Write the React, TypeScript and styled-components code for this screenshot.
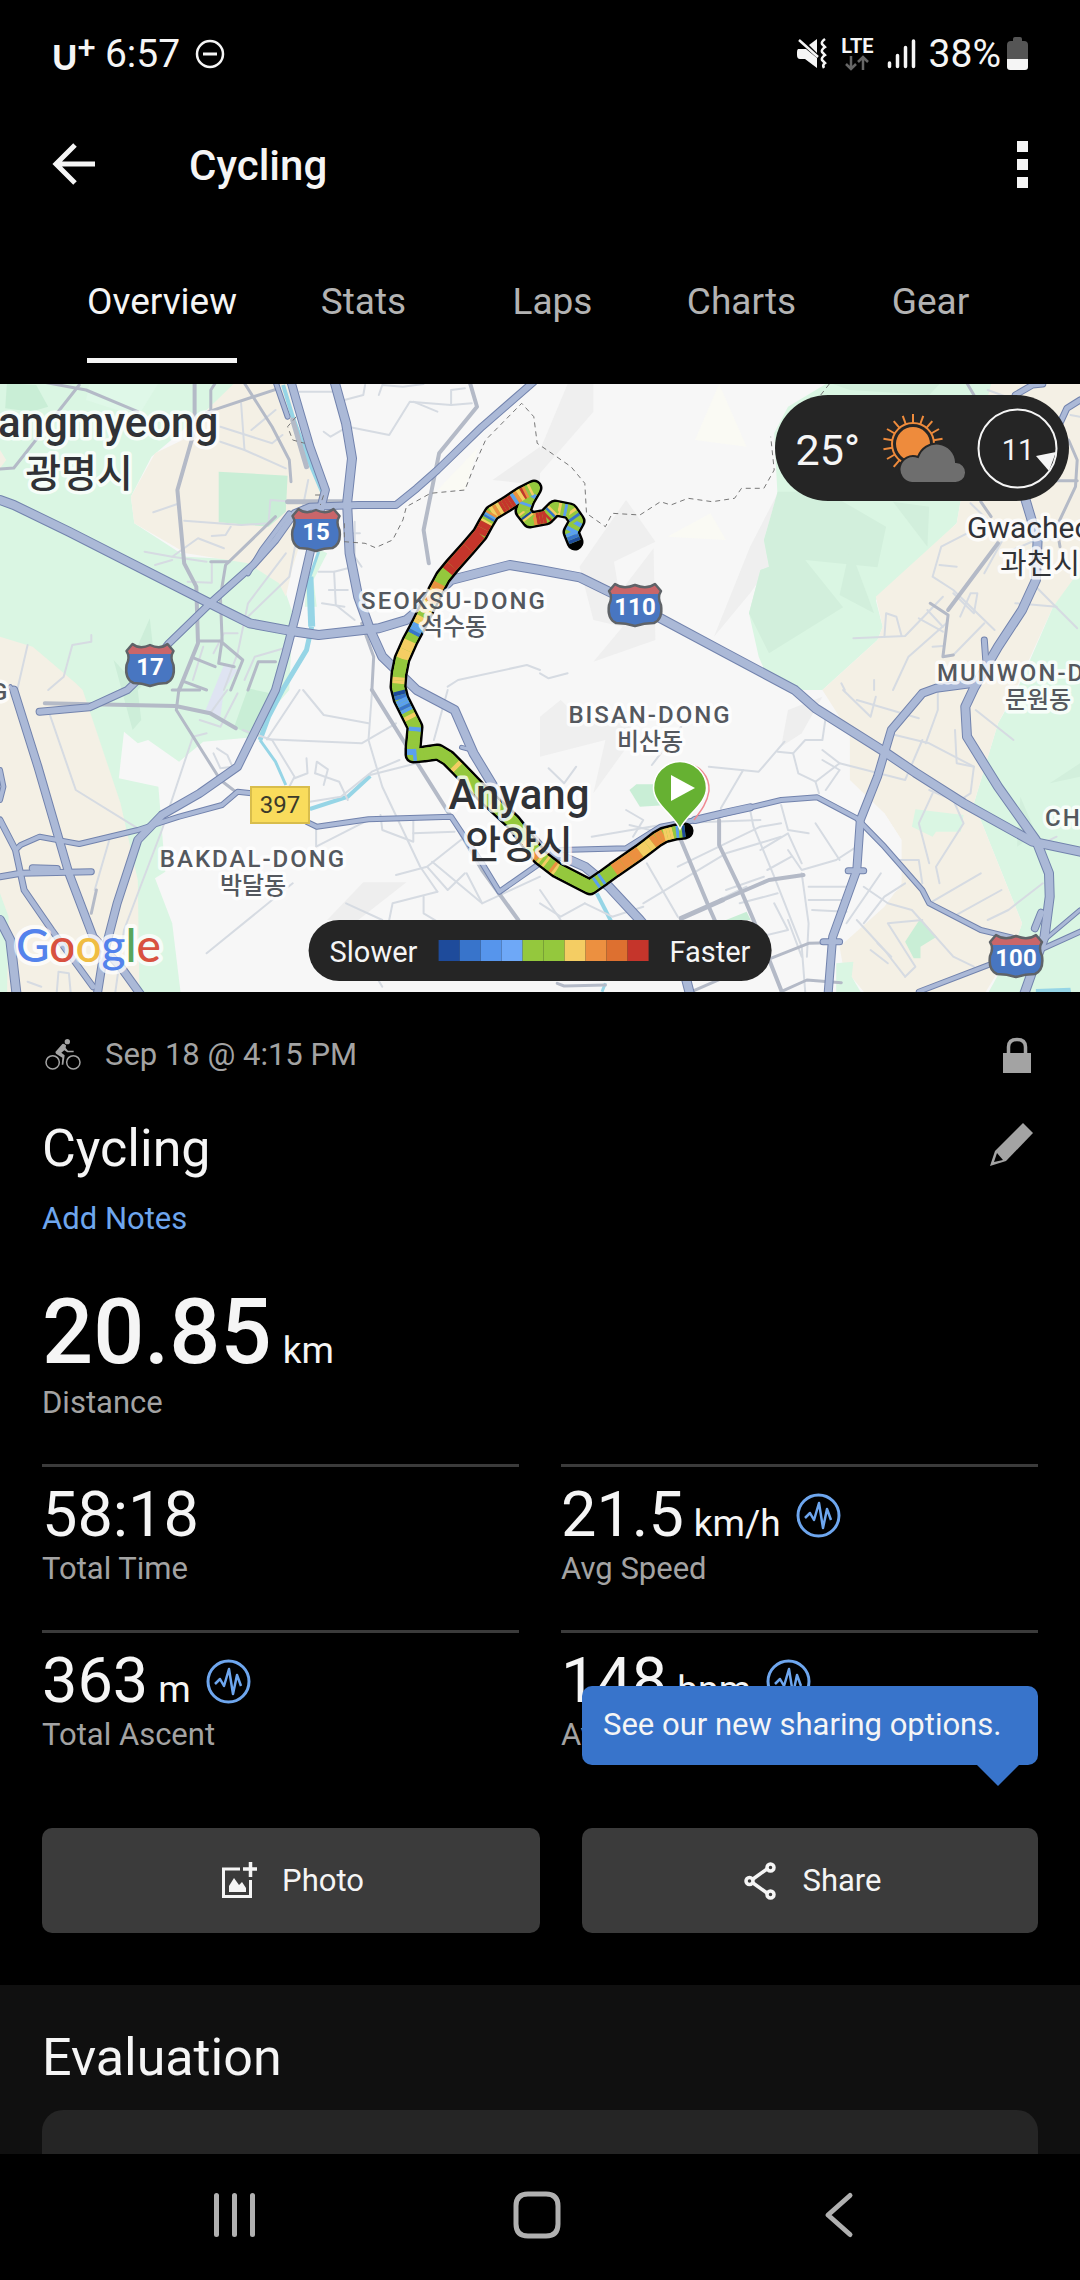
import React from "react";
import styled, { createGlobalStyle, css } from "styled-components";

const color = {
  black: "#000000",
  text: "#f5f5f5",
  muted: "#a3a3a3",
  link: "#6ea6ee",
  divider: "#3b3b3b",
  button: "#3b3b3b",
  panel: "#101010",
  card: "#252525",
  tooltip: "#3874cb",
};

const GlobalStyle = createGlobalStyle`
  *, *::before, *::after { box-sizing: border-box; }
  body {
    margin: 0;
    background: ${color.black};
    color: ${color.text};
    font-family: Roboto, "Noto Sans CJK KR", sans-serif;
  }
  button { font: inherit; color: inherit; background: none; border: 0; padding: 0; cursor: pointer; }
  svg { display: block; flex: none; }
`;

const Screen = styled.div`
  min-height: 100vh;
  display: flex;
  flex-direction: column;
`;

/* ---------- status bar ---------- */

const StatusBar = styled.div`
  height: 108px;
  padding: 0 52px;
  display: flex;
  align-items: center;
  justify-content: space-between;
  font-size: 39px;
  line-height: 44px;
`;

const StatusGroup = styled.div<{ $gap: number }>`
  display: flex;
  align-items: center;
  gap: ${(p) => p.$gap}px;
`;

const Carrier = styled.span`
  display: flex;
  align-items: flex-start;
  font-family: Lato, Roboto, sans-serif;
  font-weight: 900;
  font-size: 34px;
  line-height: 40px;
  padding-top: 6px;
`;

const CarrierPlus = styled.span`
  font-size: 32px;
  line-height: 20px;
`;

const Clock = styled.span`
  margin-right: 6px;
`;

const Network = styled.span`
  display: flex;
  flex-direction: column;
  align-items: center;
  font-size: 20px;
  line-height: 18px;
  font-weight: 700;
`;

const BatteryGroup = styled.span`
  display: flex;
  align-items: center;
  gap: 6px;
`;

/* ---------- app bar and tabs ---------- */

const AppBar = styled.header`
  height: 112px;
  padding: 0 52px;
  display: flex;
  align-items: center;
`;

const AppTitle = styled.h1`
  flex: 1;
  margin: 0;
  padding: 3px 0 0 93px;
  font-size: 42px;
  line-height: 50px;
  font-weight: 500;
`;

const Tabs = styled.div`
  display: flex;
  padding: 0 0 21px 55px;
`;

const Tab = styled.button<{ $active?: boolean }>`
  min-width: 189px;
  padding: 0 32px;
  display: flex;
  flex-direction: column;
  align-items: center;
  color: ${(p) => (p.$active ? color.text : "#b3b3b3")};
  font-size: 37px;
  line-height: 44px;
`;

const TabLabel = styled.span<{ $active?: boolean }>`
  padding: 60px 0 34px;
  border-bottom: 5px solid ${(p) => (p.$active ? color.text : "transparent")};
`;

/* ---------- map ---------- */

const MapPanel = styled.section`
  position: relative;
  height: 608px;
  background: #f7f7f7;
  overflow: hidden;
`;

const MapDrawing = styled.svg`
  width: 100%;
  height: 100%;
`;

const pill = css`
  position: absolute;
  display: flex;
  align-items: center;
  background: ${color.card};
  border-radius: 53px;
`;

const WeatherPill = styled.div`
  ${pill}
  top: 11px;
  right: 11px;
  height: 106px;
  padding: 0 11px 0 21px;
  font-size: 43px;
  line-height: 50px;
`;

const Temperature = styled.span`
  padding-top: 3px;
`;

const WeatherIcon = styled.svg`
  margin: 0 11px 0 22px;
`;

const Legend = styled.div`
  ${pill}
  left: 50%;
  bottom: 11px;
  transform: translateX(-50%);
  height: 61px;
  padding: 0 21px;
  gap: 21px;
  font-size: 29px;
  line-height: 36px;
`;

const LegendLabel = styled.span`
  padding-top: 2px;
`;

const LegendScale = styled.span`
  display: flex;
`;

const LegendStep = styled.span<{ $color: string }>`
  width: 21px;
  height: 21px;
  background: ${(p) => p.$color};
`;

/* ---------- summary ---------- */

const Summary = styled.section`
  padding: 44px 42px 52px;
`;

const MetaRow = styled.div`
  display: flex;
  align-items: center;
  gap: 21px;
  height: 38px;
`;

const Label = styled.span<{ $grow?: boolean }>`
  flex: ${(p) => (p.$grow ? 1 : "none")};
  color: ${color.muted};
  font-size: 31px;
  line-height: 38px;
`;

const TitleRow = styled.div`
  display: flex;
  align-items: flex-start;
  justify-content: space-between;
  margin-top: 44px;
`;

const SectionTitle = styled.h2`
  margin: 0;
  font-size: 52px;
  line-height: 62px;
  font-weight: 400;
`;

const NotesLink = styled.a`
  display: block;
  width: fit-content;
  margin-top: 20px;
  color: ${color.link};
  font-size: 31px;
  line-height: 38px;
  text-decoration: none;
`;

const Distance = styled.div`
  display: flex;
  flex-direction: column;
  margin: 44px 0 42px;
`;

const Value = styled.span<{ $large?: boolean }>`
  display: flex;
  align-items: baseline;
  gap: ${(p) => (p.$large ? 11 : 10)}px;
  font-size: ${(p) => (p.$large ? 90 : 63)}px;
  line-height: ${(p) => (p.$large ? 102 : 70)}px;
  font-weight: ${(p) => (p.$large ? 500 : 400)};
`;

const Unit = styled.span`
  font-size: 37px;
  line-height: 44px;
  font-weight: 400;
`;

const Badge = styled.button`
  align-self: center;
  margin-left: 5px;
`;

const StatGrid = styled.div`
  display: grid;
  grid-template-columns: 1fr 1fr;
  column-gap: 42px;
`;

const Stat = styled.div`
  display: flex;
  flex-direction: column;
  height: 166px;
  padding-top: 13px;
  border-top: 3px solid ${color.divider};
`;

const Actions = styled.div`
  display: grid;
  grid-template-columns: 498fr 456fr;
  column-gap: 42px;
  margin-top: 32px;
`;

const ActionCell = styled.div`
  position: relative;
`;

const ActionButton = styled.button`
  width: 100%;
  height: 105px;
  display: flex;
  align-items: center;
  justify-content: center;
  gap: 22px;
  border-radius: 10px;
  background: ${color.button};
  font-size: 31px;
  line-height: 38px;
`;

const Tooltip = styled.div`
  position: absolute;
  left: 0;
  right: 0;
  bottom: calc(100% + 63px);
  padding: 20px 21px 21px;
  border-radius: 10px;
  background: ${color.tooltip};
  font-size: 31px;
  line-height: 38px;
  white-space: nowrap;

  &::after {
    content: "";
    position: absolute;
    top: 100%;
    right: 19px;
    border: 21px solid transparent;
    border-top-color: ${color.tooltip};
    border-bottom: 0;
  }
`;

/* ---------- evaluation and navigation ---------- */

const Evaluation = styled.section`
  flex: 1;
  display: flex;
  flex-direction: column;
  padding: 42px 42px 0;
  background: ${color.panel};
`;

const EvaluationCard = styled.div`
  flex: 1;
  min-height: 44px;
  margin-top: 21px;
  border-radius: 21px 21px 0 0;
  background: ${color.card};
`;

const NavBar = styled.nav`
  height: 126px;
  padding: 0 90px 4px 84px;
  display: flex;
`;

const NavButton = styled.button`
  flex: 1;
  display: flex;
  align-items: center;
  justify-content: center;
`;

/* ---------- map data ---------- */

/* The map is kept as four survey sheets, each 1568 x 930 units, laid two by two. */
type Sheet = "nw" | "ne" | "sw" | "se";
const sheetOrigin: Record<Sheet, [number, number]> = {
  nw: [0, -4],
  ne: [540, -4],
  sw: [0, 306],
  se: [540, 306],
};

const project = (line: string) => {
  let sheet: Sheet = "nw";
  const out: string[] = [];
  line.split(" ").forEach((token) => {
    if (token in sheetOrigin) {
      sheet = token as Sheet;
      return;
    }
    const [x, y] = token.split(",").map(Number);
    const [ox, oy] = sheetOrigin[sheet];
    out.push(`${((x * 540) / 1568 + ox).toFixed(1)},${(y / 3 + oy).toFixed(1)}`);
  });
  return "M" + out.join("L");
};

const areas: [string, string][] = [
  ["#daf6e3", "nw 0,0 700,0 600,90 440,230 380,350 390,430 540,530 720,540 820,610 850,700 840,930 sw 790,60 750,140 590,155 520,215 430,150 400,160 360,125 345,265 460,290 480,545 450,565 500,700 527,930 0,930"],
  ["#f4f0e5", "nw 690,0 830,0 880,200 945,340 900,400 850,560 830,650 810,610 720,550 540,520 390,430 380,350 450,220 530,180 610,80"],
  ["#f4f0e5", "nw 0,210 18,240 0,265"],
  ["#f4f0e5", "nw 0,770 95,800 220,910 240,930 sw 350,340 400,570 405,930 20,930 25,680 0,610"],
  ["#daf6e3", "nw 930,510 950,520 910,600 920,680 885,680 890,600"],
  ["#c9eed6", "nw 635,275 835,287 830,395 780,440 635,427"],
  ["#c9eed6", "nw 20,10 105,15 140,80 90,95 15,85"],
  ["#dff8e8", "nw 260,10 460,10 400,110 250,60"],
  ["#cdeed9", "nw 330,840 365,880 435,715 445,810 480,850 400,930 sw 410,90 385,120"],
  ["#c9eed6", "sw 720,-5 785,10 745,145 680,110"],
  ["#dfe4f2", "nw 650,855 690,870 650,930 sw 640,80 595,65"],
  ["#eeeeee", "nw 1568,200 1430,300 1568,315"],
  ["#fafaf4", "nw 1390,200 1270,330 1350,330"],
  ["#efefef", "ne 80,12 155,12 155,95 0,280 0,210"],
  ["#fafaf4", "ne 450,180 520,12 600,200"],
  ["#efefef", "ne 250,360 335,485 215,545 230,640 330,505 335,780 155,845 240,740 155,720 115,560"],
  ["#efefef", "ne 690,340 650,480 665,560 610,640 505,770 610,500"],
  ["#fafaf4", "ne 370,470 540,480 495,400"],
  ["#eeeeee", "sw 1180,577 1055,577 950,690 1040,690"],
  ["#efefef", "se 0,200 190,150 155,310 260,160 270,60 120,90 60,30 0,80"],
  ["#eeeeee", "se 700,170 720,60 820,20 760,130"],
  ["#daf6e3", "ne 830,12 1320,12 1310,45 1220,370 1210,430 1000,640 975,660 995,740 980,780 820,930 740,930 660,890 635,830 607,700 640,570 665,560 650,480 690,350 680,160 720,80"],
  ["#d2efdc", "ne 690,335 830,335 1005,440 980,562 770,540 880,682 665,820 607,700 640,570 665,560 650,480"],
  ["#d2efdc", "ne 900,505 970,700 870,645"],
  ["#d2efdc", "ne 1025,365 1130,380 1125,500"],
  ["#d2efdc", "ne 850,12 1160,12 1130,45 900,30"],
  ["#f4f0e5", "ne 1310,12 1568,12 1568,580 1490,680 1380,930 820,930 980,780 995,740 975,650 1210,430 1220,370"],
  ["#daf6e3", "ne 1568,570 1490,680 1385,930 se 1330,100 1260,340 1400,700 1380,760 1290,930 1568,930"],
  ["#f4f0e5", "se 820,0 1382,0 1330,100 1260,340 1400,700 1380,760 1280,930 960,930 880,830 870,770 1000,650 1050,580 1050,450 1000,370 900,270 900,130"],
  ["#f7f7f7", "se 880,380 1000,370 1050,450 1010,500 1050,590 980,650 870,660"],
  ["#d2efdc", "se 1480,280 1568,220 1568,260"],
  ["#d2efdc", "se 1395,320 1385,470 1440,430"],
  ["#daf6e3", "se 1090,358 1230,375 1222,425 1150,425 1140,440 1080,410"],
  ["#c9eed6", "se 1105,685 1152,740 1105,770 1105,805 1085,805 1060,755"],
  ["#c9eed6", "se 280,283 372,283 372,345 290,350 260,300"],
  ["#c9eed6", "se 540,690 600,665 612,690"],
  ["#daf6e3", "se 860,820 910,815 905,860 945,930 860,930"],
  ["#96d5e6", "se 1440,897 1540,893 1545,930 1440,930"],
];

const water: [number, string][] = [
  [4, "nw 822,15 850,110 900,250 935,335"],
  [3, "nw 925,515 900,590"],
  [7, "nw 900,590 905,740"],
  [5, "nw 905,740 890,810 820,930 sw 780,80 755,150"],
  [3, "sw 755,150 800,215 830,285"],
  [4, "sw 900,357 1010,320 1075,258"],
  [4, "se 165,610 207,695"],
  [3, "se 180,905 190,880"],
];

const lanes = [
  "nw 870,35 965,35", "nw 940,155 960,170 1010,140 1130,165 1190,65 1310,75 1370,70", "nw 1310,75 1310,30 1350,25",
  "nw 1000,60 1055,45 1060,15", "nw 1100,45 1110,15 1170,20 1230,12", "nw 1200,65 1270,95",
  "nw 640,185 710,210 830,265", "nw 640,140 790,190 820,165", "nw 700,70 710,210", "nw 730,150 800,90",
  "nw 445,397 515,372", "nw 535,422 700,435 780,430 785,360 850,365", "nw 615,468 655,465 670,440", "nw 500,530 575,475 650,505",
  "nw 420,515 500,530 600,545", "nw 450,555 500,540", "nw 545,605 615,608 615,545", "nw 830,520 720,670 690,820 650,930",
  "nw 895,300 860,480 840,590 700,730", "nw 925,575 970,575 1010,565", "nw 955,630 1010,630", "nw 970,575 975,675 1030,720",
  "nw 935,670 1000,680", "nw 1030,425 1030,530 1050,560", "nw 1000,460 1045,460",
  "nw 80,795 50,930", "nw 265,765 265,785 210,795 185,890 140,930", "nw 840,800 740,830 710,900", "nw 590,800 560,900",
  "nw 1300,920 1330,900 1530,855 1568,870", "nw 690,760 650,760 620,820",
  "sw 140,60 220,300 400,415", "sw 880,0 940,75 1070,100", "sw 775,148 1050,160 1150,100", "sw 705,120 790,150 855,260 840,290",
  "sw 870,0 775,148", "sw 1080,10 1070,150 1110,290 1220,530 1270,605", "sw 900,335 990,320 1080,245 1160,210",
  "sw 890,205 893,250 855,265", "sw 915,250 920,215 952,238 940,285", "sw 915,250 985,275 1010,330",
  "sw 1075,255 1210,220", "sw 600,130 560,140 470,420 360,720 335,905", "sw 630,175 660,195 675,230 640,235 620,190",
  "sw 918,410 918,470 1060,395", "sw 1105,375 1110,420 1200,455 1200,390", "sw 1200,430 1320,425", "sw 600,790 850,580",
  "sw 1150,555 1240,530 1350,440", "sw 1240,530 1300,600 1350,550", "sw 1270,605 1140,640 1130,690", "sw 1230,620 1230,670 1270,695",
  "sw 1255,515 1400,640 1568,560", "sw 1005,640 1110,690", "sw 1355,550 1400,640", "sw 660,0 610,70", "sw 690,10 640,110 580,90",
  "sw 165,905 170,845 200,850 205,905", "sw 320,440 275,600", "sw 80,875 120,890", "sw 1300,0 1260,150", "sw 1000,700 1110,890",
  "se 25,235 70,280 105,230", "se 410,110 325,225", "se 490,230 635,245 710,155", "se 590,240 525,355", "se 690,185 735,190 770,150 820,150 830,80",
  "se 735,190 750,250 800,275 870,220 820,180", "se 820,210 870,240 830,300", "se 800,275 810,310", "se 870,220 1060,270 1110,150",
  "se 880,0 960,80 975,20", "se 920,30 1100,85", "se 1010,130 1130,160 1260,230", "se 1155,0 1155,60 1120,160", "se 1265,60 1375,150",
  "se 1205,120 1210,220 1260,230 1250,310 1220,330", "se 250,360 300,390 270,440", "se 260,405 400,440", "se 150,440 380,400 640,390",
  "se 400,530 640,410 700,400", "se 300,640 540,490 700,440", "se 700,345 720,420 780,430", "se 610,360 620,410 680,560 760,770 770,905",
  "se 310,520 400,680", "se 640,480 720,430 760,520", "se 660,540 730,500", "se 720,480 760,540 860,510 920,470", "se 760,550 780,700 775,800",
  "se 800,400 870,510", "se 780,590 900,590", "se 780,630 890,630", "se 790,660 890,665", "se 540,600 650,560", "se 520,630 600,590", "se 580,640 690,610",
  "se 940,590 1010,640 1080,660 1200,800 1260,830", "se 990,550 890,700", "se 940,700 1000,620 1060,580", "se 920,690 1000,780 1060,860",
  "se 960,780 1010,820", "se 980,760 1020,800", "se 1060,860 1090,830 1010,700 1110,690", "se 1130,300 1200,330 1230,400 1150,530 1160,580",
  "se 1140,310 1100,400 1130,520", "se 1130,640 1280,550", "se 1200,680 1340,600", "se 1300,690 1360,660 1460,580", "se 1030,510 1100,510 1110,580",
  "se 0,640 60,680 130,640", "se 0,600 60,690", "se 130,640 210,680 300,650", "se 680,640 720,720 640,740", "se 1460,460 1500,440", "se 720,690 760,800",
  "ne 1330,490 1310,430 1250,370", "ne 1240,460 1165,500 1140,590 1200,630 1320,750", "ne 1160,555 1210,560", "ne 910,775 1060,768 1170,650",
  "ne 1000,770 1005,700 1035,710 1050,768", "ne 1100,715 1170,755", "ne 1125,690 1170,740", "ne 1200,640 1260,700 1270,640 1250,640 1220,710",
  "ne 1140,800 1170,798", "ne 1290,730 1200,825", "ne 1180,730 1070,830 1025,930", "ne 1440,620 1560,745", "ne 1380,670 1500,680", "ne 875,910 885,930",
  "ne 970,900 970,930", "ne 1350,520 1440,480 1568,470", "ne 1290,580 1370,430", "ne 1540,105 1568,110", "ne 1300,30 1380,60", "ne 0,880 25,895 80,880",
];

const arterials: [number, string][] = [
  [3, "nw 0,267 40,264 230,15"], [3, "nw 120,5 250,30 400,95"], [4, "nw 565,10 565,150 515,330 535,550 570,620 575,790 520,930"],
  [3, "nw 625,10 612,30 612,100"], [3, "nw 600,97 810,25"], [3, "nw 710,10 790,140 840,240 845,305"], [3, "nw 800,410 655,555 640,650 645,780 635,850 680,860"],
  [4, "nw 1365,10 1385,80 1275,220 1230,450 1245,550"], [3, "nw 575,783 640,783 705,840 670,930"], [3, "nw 720,930 750,845 800,845"],
  [3, "nw 535,905 600,930"], [3, "nw 565,835 625,860"], [3, "nw 1050,730 1085,830 1080,930"], [3, "nw 612,545 665,545"], [5, "nw 835,365 1000,365"], [5, "nw 850,120 890,260"],
  [4, "sw 130,40 510,48 610,70 685,115"], [3, "sw 520,-5 512,60 640,270 690,310"], [4, "sw 1080,0 1200,200 1310,380 1400,540 1505,690"],
  [3, "sw 265,670 280,600"], [3, "sw 500,0 580,0"], [4, "se 405,440 490,650 520,720"], [4, "se 520,390 520,465 585,605 620,690 700,900"],
  [5, "se 410,685 530,630"], [4, "se 530,630 665,570 765,555"], [3, "se 670,805 780,760 840,758"], [3, "se 700,905 775,870 875,878"],
  [3, "se 50,880 70,888 190,885"], [3, "se 440,905 540,860"], [3, "ne 1133,670 1185,705 1170,830 1200,825"], [4, "ne 1185,690 1330,490"], [3, "ne 1240,10 1260,45"],
  [3, "ne 1280,365 1310,410"], [3, "ne 1500,302 1560,302"], [3, "ne 1535,180 1560,240 1555,320 1500,440 1510,500"],
];

const highways: [number, string][] = [
  [9, "nw 0,360 40,375 200,455 600,665 725,730 840,752 925,765 1100,745 1180,720 1260,650 1310,600 1480,555 ne 0,570 115,592 210,640 350,715 540,820 740,930 se 800,55 1000,185 1090,248 1230,340 1430,455 1568,485"],
  [7, "nw 1550,5 1400,140 1270,270 1210,325 1150,375 1040,375 900,380 855,400 800,480 735,555 610,670 490,790 430,870 370,930 sw 260,52 115,65"],
  [5, "nw 720,580 760,510 840,400"],
  [8, "nw 845,5 860,60 900,200 945,330 930,390 900,520 860,700 830,820 800,930 sw 690,230 580,310 470,375 400,450 340,640 300,800 280,930"],
  [5, "nw 800,5 835,110"],
  [9, "nw 970,0 1005,130 1022,235 1008,370 1015,520 1040,650 1075,750 1110,830 1210,930 sw 1320,60 1375,190 1480,370 1568,470 se 130,530 200,590 290,690 420,850 440,930"],
  [4, "sw 1340,172 1370,180"],
  [8, "sw 40,0 110,230 200,550 270,740 350,830 420,930"],
  [6, "sw 0,390 45,480 70,600 150,720 270,890"],
  [5, "sw 45,480 60,465 115,440 230,462 400,420 520,380 645,345 690,305 730,310"],
  [5, "sw 890,395 920,410 1070,388 1310,380 1400,520 1450,605 se 0,520 60,480 250,475 350,410 480,385 700,330 805,322 920,385 1000,470 1110,600 1130,640 1280,720 1400,750"],
  [7, "se 450,390 530,370 610,352"],
  [6, "sw 0,560 60,550 265,545"],
  [7, "sw 95,535 165,537"],
  [5, "sw 0,240 10,290 0,330"],
  [9, "sw 0,690 30,750 50,930"],
  [4, "nw 30,920 40,935"],
  [9, "ne 1410,360 1445,480 1440,600 1400,690 1330,800 1260,925 se 1235,50 1240,140 1330,290 1440,450 1478,550 1480,620 1465,740 1400,930"],
  [6, "ne 1290,780 1295,850"],
  [8, "ne 1260,910 1150,925 se 1110,10 1020,120 980,260 930,390 920,540 850,740 835,930"],
  [6, "se 895,542 940,542"],
  [6, "se 822,755 870,755"],
  [6, "ne 1568,60 1530,85 1510,130"],
  [6, "ne 1380,45 1430,15 1460,12"],
  [5, "se 1100,905 1310,822"],
  [5, "se 1440,785 1568,725"],
  [4, "se 1470,745 1568,660"],
  [7, "se 1437,715 1455,668"],
];

const borders = [
  "nw 1000,430 1000,485 1060,490 1090,503 1140,480 1170,420 1180,380 1250,340 1350,330 1380,250 1410,180 1515,70 1550,110 1560,190 ne 90,260 130,310 135,400 190,440 210,400 290,405 350,365 380,375 430,355 500,365 565,355 585,325 650,325 680,270 670,170",
  "ne 815,45 840,12",
  "nw 860,110 835,140 850,180 885,190",
  "nw 915,345 940,345 930,375",
];

const pace: Record<string, string> = {
  n: "#1e4b9b",
  b: "#3874cb",
  s: "#5ba0ee",
  g: "#94c83d",
  y: "#f4cd63",
  o: "#ec9040",
  r: "#c5352b",
};

/* Each stop: x, y, and the paces met on the way to it, in equal parts. */
const route: [number, number, string][] = [
  [575, 158, ""], [571, 148, "nbs"], [577, 137, "sgs"], [570, 127, "gbgy"], [555, 124, "gsgyg"], [546, 133, "gybgr"], [530, 136, "rrrog"], [523, 127, "gyngy"],
  [527, 116, "ggsg"], [534, 104, "gsg"], [522, 110, "gygor"], [507, 120, "yosrr"], [492, 129, "rryoy"], [486, 139, "osbgy"], [480, 150, "rr"], [468, 164, "r"],
  [452, 182, "r"], [443, 193, "rg"], [436, 206, "ggoo"], [428, 222, "yyoy"], [417, 244, "yygyys"], [410, 257, "sbgg"], [402, 275, "yy"],
  [399, 290, "gg"], [398, 303, "gyyg"], [401, 315, "gnb"], [409, 331, "ssbsg"], [415, 343, "ygg"], [413, 365, "sgggg"], [413, 371, "s"], [424, 370, "sgg"],
  [438, 368, "g"], [448, 374, "g"], [458, 384, "ggy"], [482, 409, "gggg"], [513, 438, "ggygsg"], [540, 473, "gggygo"], [557, 486, "ygyggoy"],
  [590, 503, "ggg"], [603, 494, "ggsgs"], [614, 486, "gg"], [640, 468, "ooo"], [648, 462, "y"], [657, 455, "yo"], [664, 451, "oo"], [676, 448, "yyyg"], [685, 447, "sgn"],
];

const routeLine = "M" + route.map(([x, y]) => `${x},${y}`).join("L");

const routeParts = route.slice(1).flatMap(([x, y, paces], i) => {
  const [px, py] = route[i];
  const n = paces.length;
  return paces.split("").map((code, k) => ({
    d: `M${px + ((x - px) * k) / n},${py + ((y - py) * k) / n}L${px + ((x - px) * (k + 1)) / n},${py + ((y - py) * (k + 1)) / n}`,
    stroke: pace[code],
  }));
});

const MapText = styled.text<{ $size: number; $weight?: number; $tracked?: boolean; $ink?: string }>`
  font-family: Roboto, "Noto Sans CJK KR", sans-serif;
  font-size: ${(p) => p.$size}px;
  font-weight: ${(p) => p.$weight ?? 500};
  letter-spacing: ${(p) => (p.$tracked ? "2px" : "normal")};
  fill: ${(p) => p.$ink ?? "#54585e"};
  stroke: rgba(255, 255, 255, 0.8);
  stroke-width: 7px;
  stroke-linejoin: round;
  paint-order: stroke;
`;

const SignText = styled.text<{ $ink: string; $weight: number }>`
  font-family: Roboto, sans-serif;
  font-size: 24px;
  font-weight: ${(p) => p.$weight};
  fill: ${(p) => p.$ink};
  text-anchor: middle;
`;

const LogoText = styled.text`
  font-family: Lato, sans-serif;
  font-size: 46px;
  font-weight: 500;
  stroke: rgba(255, 255, 255, 0.75);
  stroke-width: 8px;
  stroke-linejoin: round;
  paint-order: stroke;
`;

function Shield({ x, y, w, label }: { x: number; y: number; w: number; label: string }) {
  const h = w / 2;
  const outline = `M${-h + 7},-21 Q${-h / 2 + 2},-15 0,-20 Q${h / 2 - 2},-15 ${h - 7},-21 L${h - 1},-14 Q${h - 5},-8 ${h - 1},0 Q${h + 1},14 ${h - 8},18 Q${h / 3},18 0,21 Q${-h / 3},18 ${-h + 8},18 Q${-h - 1},14 ${-h + 1},0 Q${-h + 5},-8 ${-h + 1},-14 Z`;
  return (
    <g transform={`translate(${x} ${y})`}>
      <path d={outline} fill="#4876c1" />
      <path d={`M${-h + 7},-21 Q${-h / 2 + 2},-15 0,-20 Q${h / 2 - 2},-15 ${h - 7},-21 L${h - 1},-14 L${h - 3},-11 H${-h + 3} L${-h + 1},-14 Z`} fill="#c9666a" />
      <path d={outline} fill="none" stroke="#5f6368" strokeWidth="2.5" strokeLinejoin="round" />
      <SignText $ink="#ffffff" $weight={700} y="10">{label}</SignText>
    </g>
  );
}

function RouteMap() {
  return (
    <MapDrawing viewBox="0 0 1080 608" preserveAspectRatio="xMidYMid slice" aria-label="Route map">
      {areas.map(([fill, line], i) => <path key={i} d={project(line) + "Z"} fill={fill} />)}
      <g fill="none" stroke="#96d5e6">
        {water.map(([w, line], i) => <path key={i} d={project(line)} strokeWidth={w} />)}
      </g>
      <g fill="none" strokeLinecap="round" strokeLinejoin="round">
        {lanes.map((line, i) => <path key={i} d={project(line)} stroke="#d6dbe2" strokeWidth="2" />)}
        {arterials.map(([w, line], i) => <path key={i} d={project(line)} stroke="#b4bac7" strokeWidth={w} />)}
        {highways.map(([w, line], i) => <path key={i} d={project(line)} stroke="#7283ad" strokeWidth={w + 1} />)}
        {highways.map(([w, line], i) => <path key={i} d={project(line)} stroke="#abb9d7" strokeWidth={w - 1} />)}
      </g>
      {borders.map((line, i) => (
        <path key={i} d={project(line)} fill="none" stroke="#777777" strokeWidth="1" strokeDasharray="5 4" />
      ))}

      <g fill="none" strokeLinejoin="round">
        <path d={routeLine} stroke="#000000" strokeWidth="17" strokeLinecap="round" />
        <path d={routeLine} stroke={pace.g} strokeWidth="12" />
        {routeParts.map((part, i) => <path key={i} d={part.d} stroke={part.stroke} strokeWidth="12" />)}
      </g>

      <MapText $size={42} $ink="#303236" x="-2" y="53">angmyeong</MapText>
      <MapText $size={39} $ink="#303236" x="79" y="103" textAnchor="middle">광명시</MapText>
      <MapText $size={24} $tracked x="454" y="225" textAnchor="middle">SEOKSU-DONG</MapText>
      <MapText $size={24} x="454" y="251" textAnchor="middle">석수동</MapText>
      <MapText $size={30} $weight={400} $ink="#303236" x="967" y="154">Gwacheo</MapText>
      <MapText $size={29} $weight={400} $ink="#303236" x="1000" y="190">과천시</MapText>
      <MapText $size={24} $tracked x="937" y="297">MUNWON-D</MapText>
      <MapText $size={24} x="1038" y="324" textAnchor="middle">문원동</MapText>
      <MapText $size={24} x="-9" y="316">G</MapText>
      <MapText $size={24} $tracked x="650" y="339" textAnchor="middle">BISAN-DONG</MapText>
      <MapText $size={24} x="650" y="366" textAnchor="middle">비산동</MapText>
      <MapText $size={42} $ink="#303236" x="519" y="425" textAnchor="middle">Anyang</MapText>
      <MapText $size={39} $ink="#303236" x="519" y="474" textAnchor="middle">안양시</MapText>
      <MapText $size={24} $tracked x="1045" y="442">CH</MapText>
      <MapText $size={24} $tracked x="253" y="483" textAnchor="middle">BAKDAL-DONG</MapText>
      <MapText $size={24} x="253" y="510" textAnchor="middle">박달동</MapText>

      <Shield x={316} y={146} w={49} label="15" />
      <Shield x={150} y={281} w={49} label="17" />
      <Shield x={635} y={221} w={54} label="110" />
      <Shield x={1016} y={572} w={54} label="100" />
      <rect x="251" y="403" width="58" height="36" fill="#f9dc5c" stroke="#d8bd4c" strokeWidth="2" />
      <SignText $ink="#3c3a2a" $weight={400} x="280" y="429">397</SignText>

      <path d="M684 379 C699 380 710 392 709 407 C707 420 700 428 694 436" fill="none" stroke="#f08a92" strokeWidth="1.5" />
      <path d="M680 445 C674 431 653.500 420 653.500 404 A26.500 26.500 0 0 1 706.500 404 C706.500 420 686 431 680 445 Z" fill="#66b132" stroke="#ffffff" strokeWidth="1.5" />
      <path d="M671 391 L695 404 L671 417 Z" fill="#ffffff" />

      <LogoText x="16" y="578">
        <tspan fill="#5383ec">G</tspan>
        <tspan fill="#d85140">o</tspan>
        <tspan fill="#f0bd42">o</tspan>
        <tspan fill="#5383ec">g</tspan>
        <tspan fill="#58a55c">l</tspan>
        <tspan fill="#d85140">e</tspan>
      </LogoText>
    </MapDrawing>
  );
}

const rayAngles = Array.from({ length: 12 }, (_, k) => -90 + (k - 7) * 20);

function Weather() {
  return (
    <WeatherPill>
      <Temperature>25°</Temperature>
      <WeatherIcon width="84" height="72" viewBox="0 0 84 72" aria-label="Partly cloudy">
        <circle cx="31" cy="32" r="17" fill="#ee8b3c" />
        <circle cx="31" cy="32" r="21" fill="none" stroke="#ee8b3c" strokeWidth="2" />
        {rayAngles.map((a) => (
          <path key={a} d="M21 0H30" stroke="#ee8b3c" strokeWidth="2" transform={`translate(31 32) rotate(${a})`} />
        ))}
        <path
          d="M30 71 A13.500 13.500 0 1 1 36 45 A19.500 19.500 0 0 1 74 50 A10.500 10.500 0 0 1 73 71 Z"
          fill="#6e6e6e"
          stroke={color.card}
          strokeWidth="2"
        />
      </WeatherIcon>
      <svg width="81" height="81" viewBox="0 0 81 81" aria-label="Wind 11">
        <circle cx="40.500" cy="40.500" r="39" fill="none" stroke={color.text} strokeWidth="2" />
        <path d="M59 48 L79 44 L72 63 Z" fill={color.text} />
        <text x="41" y="52" textAnchor="middle" fontSize="29" fontFamily="Roboto, sans-serif" fill={color.text}>11</text>
      </svg>
    </WeatherPill>
  );
}

const legendSteps = ["#1e4b9b", "#3874cb", "#5695ec", "#6ea8f7", "#94c83d", "#94c83d", "#f4cd63", "#ec9040", "#dd7030", "#c5352b"];

/* ---------- small drawings ---------- */

const MuteIcon = () => (
  <svg width="32" height="32" viewBox="0 0 32 32" fill={color.text}>
    <path d="M2 11 Q1 12 1 14 V17 Q1 21 4 21 H9 L21 30 V20 L10 11 Z" />
    <path d="M13 7 L21 1 V15 Z" />
    <path d="M3 2 L22 19" stroke={color.text} strokeWidth="2.5" />
    <path d="M29 1 Q25 4 26 6 L29 9 Q25 12 26 14 L29 17 Q25 20 26 22 L29 25 Q26 27 28 30" fill="none" stroke={color.text} strokeWidth="2.5" />
  </svg>
);

const DataArrows = () => (
  <svg width="24" height="16" viewBox="0 0 24 16" fill="none" stroke="#666666" strokeWidth="2.5">
    <path d="M6 1V14M1 9L6 14L11 9M18 15V2M13 7L18 2L23 7" />
  </svg>
);

const SignalIcon = () => (
  <svg width="29" height="32" viewBox="0 0 29 32" stroke={color.text} strokeWidth="3.500" strokeLinecap="round">
    <path d="M2.500 25V28.500M10.500 17.500V28.500M18.500 9.500V28.500M26.500 3V28.500" />
  </svg>
);

const BatteryIcon = () => (
  <svg width="21" height="34" viewBox="0 0 21 34">
    <path d="M6 4V2Q6 0 8 0H13Q15 0 15 2V4H17Q21 4 21 8V22H0V8Q0 4 4 4Z" fill="#555555" />
    <path d="M0 22H21V30Q21 33 18 33H3Q0 33 0 30Z" fill={color.text} />
  </svg>
);

const DndIcon = () => (
  <svg width="30" height="30" viewBox="0 0 30 30" fill="none" stroke={color.text} strokeWidth="2.500">
    <circle cx="15" cy="15" r="13" />
    <path d="M8 15H22" strokeWidth="3" />
  </svg>
);

const BackArrow = () => (
  <svg width="44" height="44" viewBox="0 0 44 44" fill="none" stroke={color.text} strokeWidth="5">
    <path d="M43 22H5M23 3L4 22L23 41" />
  </svg>
);

const MoreIcon = () => (
  <svg width="11" height="47" viewBox="0 0 11 47" fill={color.text}>
    <path d="M0 0H11V11H0ZM0 18H11V29H0ZM0 36H11V47H0Z" />
  </svg>
);

const CyclistIcon = () => (
  <svg width="42" height="38" viewBox="36 48 126 114" fill={color.muted}>
    <g fill="none" stroke={color.muted} strokeWidth="4.500">
      <circle cx="68" cy="127" r="20" />
      <circle cx="130" cy="127" r="20" />
    </g>
    <circle cx="112" cy="65" r="8" />
    <path d="M76 96 L97 72 Q102 69 108 76 L107 84 L114 92 H131 V97 H112 L103 91 L94 98 L104 106 L100 134 H95 L97 113 L78 101 Z" />
  </svg>
);

const LockIcon = () => (
  <svg width="42" height="38" viewBox="0 0 42 38">
    <path d="M12.500 18V11Q12.500 3.500 21 3.500Q29.500 3.500 29.500 11V18" fill="none" stroke={color.muted} strokeWidth="3.500" />
    <path d="M7 17H35V37H7Z" fill={color.muted} />
  </svg>
);

const PencilIcon = () => (
  <svg width="54" height="54" viewBox="0 0 54 54">
    <path d="M39 5 L49 15 L22 43 L6 48 L11 33 Z" fill={color.muted} />
    <path d="M13 35 L19 42 L10 44 Z" fill={color.black} />
  </svg>
);

const WaveIcon = () => (
  <svg width="45" height="45" viewBox="0 0 45 45" fill="none" stroke={color.link} strokeLinejoin="round">
    <circle cx="22.500" cy="22.500" r="20.500" strokeWidth="3" />
    <path d="M9 25 L14 20 L18 27 L23 10 L27 35 L31 16 L35 27" strokeWidth="2.500" />
  </svg>
);

const PhotoIcon = () => (
  <svg width="42" height="42" viewBox="0 0 42 42">
    <path d="M22 9H5.500V36.500H32.500V20" fill="none" stroke={color.text} strokeWidth="3" />
    <path d="M32.500 2V17M25 9H39" stroke={color.text} strokeWidth="3.500" />
    <path d="M11 32V26L16 18L21 25L24 22L28 28V32Z" fill={color.text} />
  </svg>
);

const ShareIcon = () => (
  <svg width="42" height="42" viewBox="0 0 42 42" fill="none" stroke={color.text} strokeWidth="3.500">
    <path d="M14 19L28 9M14 23L28 33" />
    <circle cx="10.500" cy="21" r="3.500" />
    <circle cx="31.500" cy="7.500" r="3.500" />
    <circle cx="31.500" cy="34.500" r="3.500" />
  </svg>
);

const NavGlyph = ({ d }: { d: string }) => (
  <svg width="48" height="48" viewBox="0 0 48 48" fill="none" stroke="#b0b0b0" strokeWidth="5" strokeLinecap="round" strokeLinejoin="round">
    <path d={d} />
  </svg>
);

/* ---------- page ---------- */

const tabs = ["Overview", "Stats", "Laps", "Charts", "Gear"];

const stats = [
  { value: "58:18", label: "Total Time" },
  { value: "21.5", unit: "km/h", label: "Avg Speed", chart: true },
  { value: "363", unit: "m", label: "Total Ascent", chart: true },
  { value: "148", unit: "bpm", label: "Avg HR", chart: true },
];

export default function App() {
  return (
    <Screen>
      <GlobalStyle />
      <StatusBar>
        <StatusGroup $gap={9}>
          <Carrier>U<CarrierPlus>+</CarrierPlus></Carrier>
          <Clock>6:57</Clock>
          <DndIcon />
        </StatusGroup>
        <StatusGroup $gap={13}>
          <MuteIcon />
          <Network>LTE<DataArrows /></Network>
          <SignalIcon />
          <BatteryGroup>38%<BatteryIcon /></BatteryGroup>
        </StatusGroup>
      </StatusBar>

      <AppBar>
        <button aria-label="Back"><BackArrow /></button>
        <AppTitle>Cycling</AppTitle>
        <button aria-label="More options"><MoreIcon /></button>
      </AppBar>

      <Tabs role="tablist">
        {tabs.map((name, i) => (
          <Tab key={name} role="tab" aria-selected={i === 0} $active={i === 0}>
            <TabLabel $active={i === 0}>{name}</TabLabel>
          </Tab>
        ))}
      </Tabs>

      <MapPanel>
        <RouteMap />
        <Weather />
        <Legend>
          <LegendLabel>Slower</LegendLabel>
          <LegendScale>
            {legendSteps.map((step, i) => <LegendStep key={i} $color={step} />)}
          </LegendScale>
          <LegendLabel>Faster</LegendLabel>
        </Legend>
      </MapPanel>

      <Summary>
        <MetaRow>
          <CyclistIcon />
          <Label $grow>Sep 18 @ 4:15 PM</Label>
          <button aria-label="Privacy"><LockIcon /></button>
        </MetaRow>
        <TitleRow>
          <SectionTitle>Cycling</SectionTitle>
          <button aria-label="Edit title"><PencilIcon /></button>
        </TitleRow>
        <NotesLink href="#notes">Add Notes</NotesLink>
        <Distance>
          <Value $large>20.85<Unit>km</Unit></Value>
          <Label>Distance</Label>
        </Distance>
        <StatGrid>
          {stats.map((s) => (
            <Stat key={s.label}>
              <Value>
                {s.value}
                {s.unit && <Unit>{s.unit}</Unit>}
                {s.chart && <Badge aria-label={`${s.label} chart`}><WaveIcon /></Badge>}
              </Value>
              <Label>{s.label}</Label>
            </Stat>
          ))}
        </StatGrid>
        <Actions>
          <ActionCell>
            <ActionButton><PhotoIcon />Photo</ActionButton>
          </ActionCell>
          <ActionCell>
            <Tooltip role="tooltip">See our new sharing options.</Tooltip>
            <ActionButton><ShareIcon />Share</ActionButton>
          </ActionCell>
        </Actions>
      </Summary>

      <Evaluation>
        <SectionTitle>Evaluation</SectionTitle>
        <EvaluationCard />
      </Evaluation>

      <NavBar>
        <NavButton aria-label="Recent apps"><NavGlyph d="M5.500 4.500V43.500M23.500 4.500V43.500M41.500 4.500V43.500" /></NavButton>
        <NavButton aria-label="Home"><NavGlyph d="M15 3H33Q45 3 45 15V33Q45 45 33 45H15Q3 45 3 33V15Q3 3 15 3Z" /></NavButton>
        <NavButton aria-label="Back"><NavGlyph d="M35 4.500L13 24L35 43.500" /></NavButton>
      </NavBar>
    </Screen>
  );
}
